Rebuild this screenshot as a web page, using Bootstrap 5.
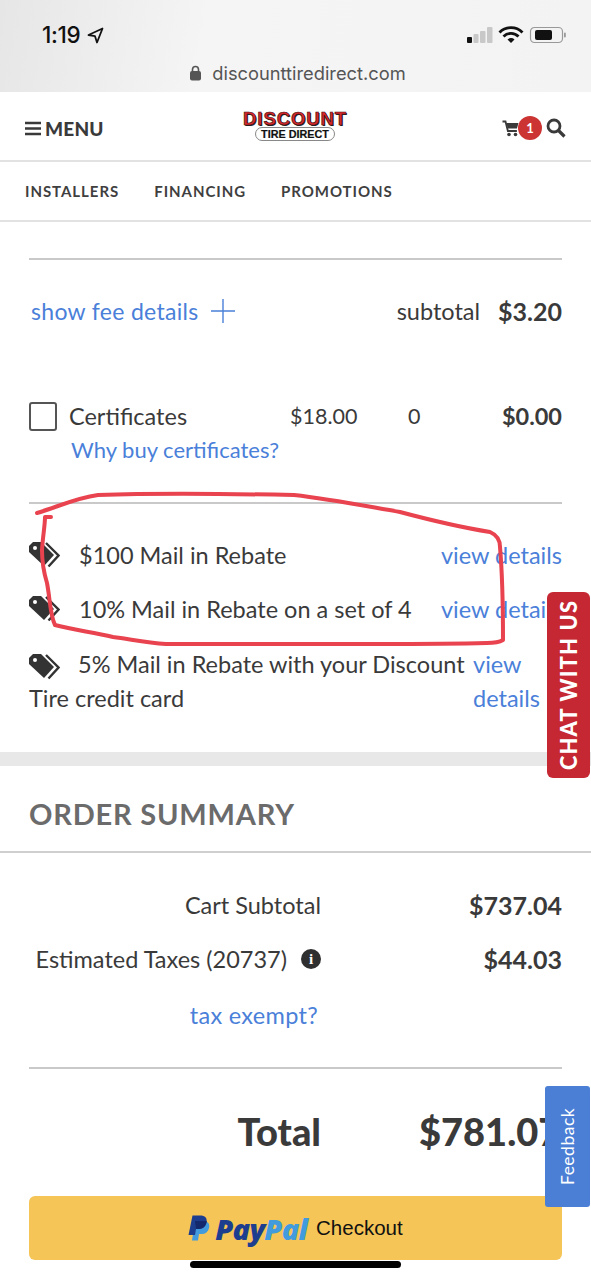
<!DOCTYPE html>
<html lang="en">
<head>
  <meta charset="UTF-8">
  <title>Cart - Discount Tire Direct</title>
  <link href="https://cdn.jsdelivr.net/npm/bootstrap@5.3.0/dist/css/bootstrap.min.css" rel="stylesheet">
  <style>
    html, body { height: 1279px; overflow: hidden; }
    body { font-family: Lato, "Open Sans", sans-serif; color: #3a3a3a; font-size: 23.5px; background: #fff; position: relative; line-height: 34px; }
    a { color: #4a80d9; text-decoration: none; }
    .phone-top { height: 92px; background: linear-gradient(100deg, #e6e6e6 0%, #f5f5f5 35%, #f3f3f3 100%); }
    .status-row { height: 58px; padding: 14px 24px 0 42px; }
    .clock { font-family: Inter, sans-serif; font-size: 22.5px; font-weight: 500; color: #111; line-height: 42px; letter-spacing: -.3px; }
    .clock svg { margin-left: 3px; }
    .status-icons { margin-top: 12px; }
    .url-row { font-family: Inter, sans-serif; font-size: 18.3px; color: #555; line-height: 30px; padding-left: 4px; }
    .url-row span { margin-left: 2px; }
    .site-head { height: 70px; border-bottom: 2px solid #e2e2e2; padding: 4px 25px 0; position: relative; }
    .menu-word { font-weight: 900; font-size: 19px; color: #3a3a3a; line-height: 1; letter-spacing: .2px; }
    .logo-box { position: absolute; left: 243px; top: 18px; width: 104px; text-align: center; line-height: 1; }
    .logo-top { font-family: "Liberation Sans", sans-serif; font-weight: 700; font-size: 18.5px; line-height: 17px; color: #d8282c; -webkit-text-stroke: .6px #3a1212; text-shadow: 1px 1px 0 #222; letter-spacing: .9px; white-space: nowrap; }
    .logo-pill { display: block; width: 80px; margin: 0 auto; border: 1px solid #888; border-radius: 8px; font-family: "Liberation Sans", sans-serif; font-weight: 700; font-size: 10.8px; line-height: 12px; color: #111; white-space: nowrap; -webkit-text-stroke: .2px #111; }
    .cart-count { width: 24px; height: 24px; border-radius: 50%; background: #cc3333; color: #fff; font-size: 13px; font-weight: 700; line-height: 24px; text-align: center; margin-left: -2px; }
    .site-links { height: 60px; border-bottom: 2px solid #e2e2e2; padding: 0 25px; gap: 35px; font-weight: 700; font-size: 15px; letter-spacing: .95px; color: #3f3f3f; }
    .rule-line { height: 2px; background: #c9c9c9; margin: 0 29px; }
    .top-rule { margin-top: 36px; }
    .fee-row { height: 102px; padding: 0 29px 0 31px; }
    .fee-row a { font-size: 23px; letter-spacing: .32px; }
    .fee-row svg { margin-left: 2px; }
    .money { font-weight: 700; font-size: 25px; }
    .fee-sum { gap: 18px; }
    .cert-row { padding: 0 29px; margin-top: 37px; height: 34px; }
    .cert-row .money { font-size: 23.5px; }
    .tick-box { width: 28px; height: 29px; border: 2px solid #555; border-radius: 3px; }
    .cert-name { margin-left: 12px; width: 221px; }
    .cert-price { width: 118px; font-size: 21.5px; }
    .cert-qty { width: 45px; font-size: 21.5px; }
    .why-link { margin: 0 0 35px 71px; display: block; line-height: 34px; font-size: 22px; }
    .rebate-list { padding: 0 29px; margin-top: 24px; }
    .rebate-line { height: 54px; }
    .rebate-name { margin-left: 19px; }
    .rebate-long { margin-top: 11px; }
    .rebate-long .rebate-name { margin-left: 12px; }
    .rebate-text { width: 444px; }
    .view-two { width: 68px; flex: none; }
    .grey-band { height: 14px; background: #e8e8e8; margin-top: 37px; }
    .summary-title { font-size: 29px; font-weight: 700; color: #6b6b6b; letter-spacing: .8px; height: 87px; padding: 30px 29px 0; border-bottom: 2px solid #cfcfcf; line-height: 36px; }
    .sum-block { padding-top: 25px; }
    .sum-row { padding: 0 29px; height: 54px; }
    .sum-label { width: 292px; text-align: right; flex: none; }
    .info-dot { width: 20px; height: 20px; border-radius: 50%; background: #2f2f2f; color: #fff; font-family: "Liberation Serif", serif; font-weight: 700; font-size: 15px; line-height: 20px; text-align: center; margin-left: 14px; flex: none; }
    .exempt-row { margin-top: 2px; }
    .exempt-row a { padding-right: 3px; letter-spacing: .3px; }
    .bottom-rule { margin-top: 25px; }
    .total-row { height: 127px; padding: 0 0 3px 29px; font-size: 38px; font-weight: 900; white-space: nowrap; }
    .total-amount { margin-left: 98px; }
    .pay-btn { display: flex; align-items: center; justify-content: center; height: 64px; margin: 0 29px; background: #f5c557; border-radius: 6px; }
    .pay-mark { margin-right: 5px; }
    .pay-word { font-weight: 800; font-style: italic; font-size: 29px; line-height: 1; font-family: "Open Sans", sans-serif; letter-spacing: -.8px; }
    .pay-dark { color: #1d3e8f; }
    .pay-light { color: #419bdd; }
    .pay-check { font-family: "Liberation Sans", sans-serif; font-size: 20.5px; color: #111; margin-left: 9px; }
    .chat-tab { position: absolute; left: 547px; top: 592px; width: 43px; height: 186px; background: #c52833; border-radius: 6px; color: #fff; font-weight: 900; font-size: 21.8px; letter-spacing: 1.2px; writing-mode: vertical-rl; transform: rotate(180deg); text-align: center; line-height: 43px; }
    .feedback-tab { position: absolute; left: 545px; top: 1086px; width: 45px; height: 121px; background: #4b7fd6; border-radius: 3px; color: #fff; font-size: 17.5px; writing-mode: vertical-rl; transform: rotate(180deg); text-align: center; line-height: 45px; letter-spacing: .5px; }
    .home-bar { position: absolute; left: 190px; top: 1261px; width: 211px; height: 7px; border-radius: 4px; background: #000; }
    .red-circle { position: absolute; left: 0; top: 480px; pointer-events: none; }
  </style>
</head>
<body>
  <div class="phone-top">
    <div class="status-row d-flex justify-content-between align-items-start">
      <div class="clock d-flex align-items-center gap-1">1:19
        <svg width="17" height="17" viewBox="0 0 17 17"><path d="M15.500 1.500 1.500 8l6.500 1.200L10 15.500z" fill="none" stroke="#111" stroke-width="1.800" stroke-linejoin="round"/></svg>
      </div>
      <svg class="status-icons" width="101" height="19" viewBox="0 0 101 19">
        <rect x="1" y="11" width="5" height="6" rx="1" fill="#111"/><rect x="7.500" y="8" width="5" height="9" rx="1" fill="#c8c8c8"/><rect x="14" y="5" width="5.500" height="12" rx="1" fill="#c8c8c8"/><rect x="21" y="1" width="5.500" height="16" rx="1" fill="#c8c8c8"/>
        <path d="M33.500 6.500a16 16 0 0 1 23 0M37.500 10.500a10.500 10.500 0 0 1 15 0" fill="none" stroke="#111" stroke-width="2.800"/><path d="M41.500 13.500a5 5 0 0 1 7 0L45 17z" fill="#111"/>
        <rect x="64.500" y="1.500" width="32" height="15" rx="4" fill="none" stroke="#999" stroke-width="1.200"/><rect x="69" y="4" width="17" height="10" rx="2" fill="#111"/><rect x="98" y="6.500" width="1.800" height="5" rx=".9" fill="#999"/>
      </svg>
    </div>
    <div class="url-row d-flex justify-content-center align-items-center gap-2">
      <svg width="13" height="16" viewBox="0 0 13 16"><path d="M3.500 7V4.500a3 3 0 0 1 6 0V7" fill="none" stroke="#555" stroke-width="1.600"/><rect x="1" y="6" width="11" height="9.500" rx="2" fill="#555"/></svg>
      <span>discounttiredirect.com</span>
    </div>
  </div>

  <header class="site-head d-flex justify-content-between align-items-center">
    <div class="d-flex align-items-center gap-1">
      <svg width="16" height="15" viewBox="0 0 16 15"><path d="M0 2h16M0 7.500h16M0 13h16" stroke="#3a3a3a" stroke-width="2.600"/></svg>
      <span class="menu-word">MENU</span>
    </div>
    <div class="logo-box">
      <div class="logo-top">DISCOUNT</div>
      <span class="logo-pill">TIRE DIRECT</span>
    </div>
    <div class="d-flex align-items-center">
      <svg width="18" height="17" viewBox="0 0 17 17"><path d="M0 1.500h3l2.400 9.500h9" fill="none" stroke="#3a3a3a" stroke-width="1.800"/><path d="M4 3h12l-1.600 5.600H5.200z" fill="#3a3a3a"/><circle cx="6.500" cy="14.500" r="1.800" fill="#3a3a3a"/><circle cx="13" cy="14.500" r="1.800" fill="#3a3a3a"/></svg>
      <div class="cart-count">1</div>
      <svg class="ms-1" width="20" height="20" viewBox="0 0 20 20"><circle cx="8" cy="8" r="6" fill="none" stroke="#3a3a3a" stroke-width="2.800"/><path d="m12.500 12.500 6 6" stroke="#3a3a3a" stroke-width="3.200"/></svg>
    </div>
  </header>

  <nav class="site-links d-flex align-items-center">
    <span>INSTALLERS</span><span>FINANCING</span><span>PROMOTIONS</span>
  </nav>

  <div class="rule-line top-rule"></div>

  <div class="fee-row d-flex justify-content-between align-items-center">
    <a href="#" class="d-flex align-items-center gap-2">show fee details
      <svg class="ms-1" width="24" height="24" viewBox="0 0 24 24"><path d="M12 0v24M0 12h24" stroke="#4a80d9" stroke-width="1.400"/></svg>
    </a>
    <div class="d-flex fee-sum align-items-center"><span>subtotal</span><span class="money">$3.20</span></div>
  </div>

  <div class="cert-row d-flex align-items-center">
    <div class="tick-box flex-shrink-0"></div>
    <span class="cert-name">Certificates</span>
    <span class="cert-price">$18.00</span>
    <span class="cert-qty">0</span>
    <span class="money ms-auto">$0.00</span>
  </div>
  <a href="#" class="why-link">Why buy certificates?</a>

  <div class="rule-line"></div>

  <div class="rebate-list">
    <div class="rebate-line d-flex align-items-center">
      <svg width="31" height="26" viewBox="0 0 31 26"><path d="M0 4 4 0h8l13 13-10 11L0 10z" fill="#333"/><circle cx="6" cy="6" r="2" fill="#fff"/><path d="m17 1 12.500 12.500-10 11" fill="none" stroke="#333" stroke-width="2.400"/></svg>
      <span class="rebate-name">$100 Mail in Rebate</span>
      <a href="#" class="ms-auto">view details</a>
    </div>
    <div class="rebate-line d-flex align-items-center">
      <svg width="31" height="26" viewBox="0 0 31 26"><path d="M0 4 4 0h8l13 13-10 11L0 10z" fill="#333"/><circle cx="6" cy="6" r="2" fill="#fff"/><path d="m17 1 12.500 12.500-10 11" fill="none" stroke="#333" stroke-width="2.400"/></svg>
      <span class="rebate-name">10% Mail in Rebate on a set of 4</span>
      <a href="#" class="ms-auto text-nowrap">view details</a>
    </div>
    <div class="rebate-long d-flex">
      <div class="rebate-text flex-shrink-0">
        <svg class="align-middle" width="31" height="26" viewBox="0 0 31 26"><path d="M0 4 4 0h8l13 13-10 11L0 10z" fill="#333"/><circle cx="6" cy="6" r="2" fill="#fff"/><path d="m17 1 12.500 12.500-10 11" fill="none" stroke="#333" stroke-width="2.400"/></svg>
        <span class="rebate-name">5% Mail in Rebate with your Discount Tire credit card</span>
      </div>
      <a href="#" class="view-two">view details</a>
    </div>
  </div>

  <div class="grey-band"></div>

  <div class="summary-title">ORDER SUMMARY</div>

  <div class="sum-block">
    <div class="sum-row d-flex align-items-center">
      <span class="sum-label">Cart Subtotal</span>
      <span class="money ms-auto">$737.04</span>
    </div>
    <div class="sum-row d-flex align-items-center">
      <span class="sum-label d-flex justify-content-end align-items-center text-nowrap">Estimated Taxes (20737)<span class="info-dot">i</span></span>
      <span class="money ms-auto">$44.03</span>
    </div>
    <div class="sum-row exempt-row d-flex align-items-center">
      <a href="#" class="sum-label">tax exempt?</a>
    </div>
  </div>

  <div class="rule-line bottom-rule"></div>

  <div class="total-row d-flex align-items-center">
    <span class="sum-label">Total</span>
    <span class="total-amount">$781.07</span>
  </div>

  <a href="#" class="pay-btn">
    <svg class="pay-mark" width="22" height="26" viewBox="0 0 22 26"><path d="M7 6h8c5 0 7 3 6 7-1 4-3.500 6-7.500 6H11l-1 6.500H4z" fill="#419bdd"/><path d="M4.500 0.500H12c5 0 7.500 2.500 6.500 7-1 4.500-4 6.500-8 6.500H8l-1 6H0.500z" fill="#1d3e8f"/><path d="M7 6h11.800c-.6 5-4 8-8.300 8H8z" fill="#14296b"/></svg>
    <span class="pay-word"><span class="pay-dark">Pay</span><span class="pay-light">Pal</span></span>
    <span class="pay-check">Checkout</span>
  </a>

  <svg class="red-circle" width="591" height="175" viewBox="0 0 591 175"><path d="M37 33C55 28 75 18 98 15 160 13 240 14 294 15 330 19 365 26 400 32 430 40 465 48 490 52 497 55 500 60 500 67 502 90 503 110 503 160 498 163 492 163 487 163 450 164 410 164 377 164L166 164C145 163 130 159 113 157 90 152 70 149 55 145 50 135 50 118 47 103 43 90 42 80 42 70 43 55 45 45 45 37L51 37" fill="none" stroke="#e8434f" stroke-width="4" stroke-linecap="round" stroke-linejoin="round"/></svg>

  <div class="chat-tab">CHAT WITH US</div>
  <div class="feedback-tab">Feedback</div>
  <div class="home-bar"></div>
</body>
</html>
